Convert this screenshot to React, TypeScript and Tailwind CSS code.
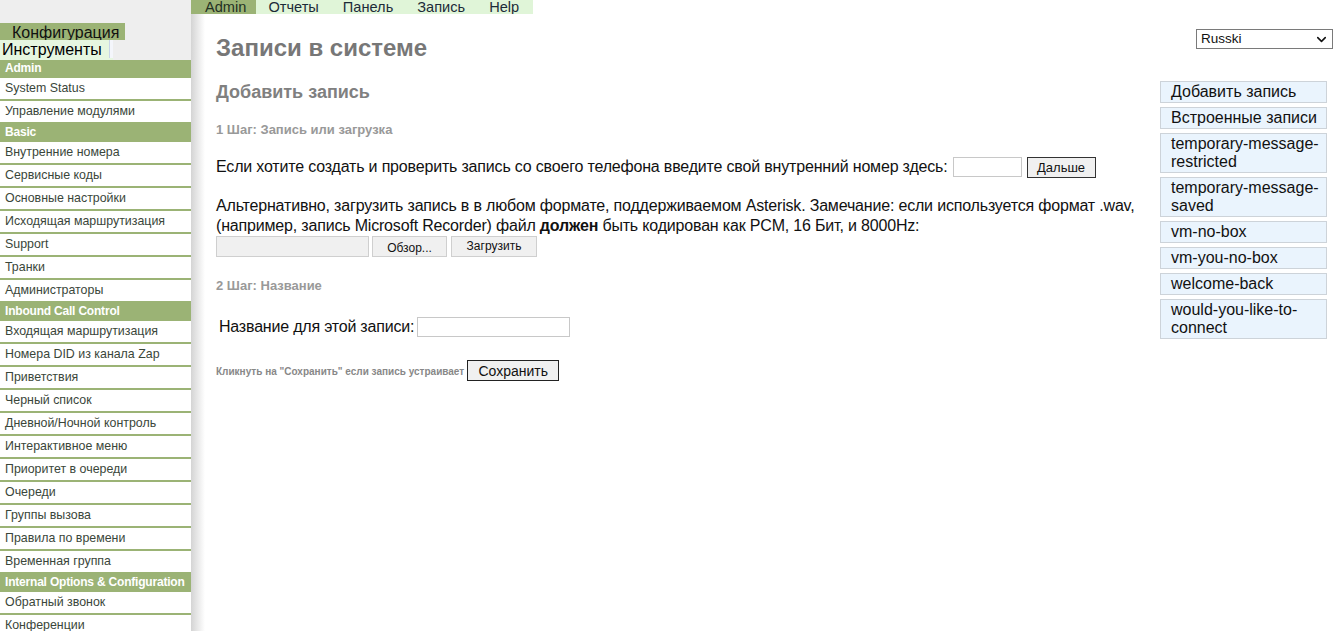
import { ChevronDown } from "lucide-react";

type NavGroup = { title: string; items: string[] };

const groups: NavGroup[] = [
	{ title: "Admin", items: ["System Status", "Управление модулями"] },
	{
		title: "Basic",
		items: [
			"Внутренние номера",
			"Сервисные коды",
			"Основные настройки",
			"Исходящая маршрутизация",
			"Support",
			"Транки",
			"Администраторы",
		],
	},
	{
		title: "Inbound Call Control",
		items: [
			"Входящая маршрутизация",
			"Номера DID из канала Zap",
			"Приветствия",
			"Черный список",
			"Дневной/Ночной контроль",
			"Интерактивное меню",
			"Приоритет в очереди",
			"Очереди",
			"Группы вызова",
			"Правила по времени",
			"Временная группа",
		],
	},
	{
		title: "Internal Options & Configuration",
		items: ["Обратный звонок", "Конференции", "Парковка"],
	},
];

const topNav = ["Admin", "Отчеты", "Панель", "Запись", "Help"];

const recordings = [
	"Добавить запись",
	"Встроенные записи",
	"temporary-message-restricted",
	"temporary-message-saved",
	"vm-no-box",
	"vm-you-no-box",
	"welcome-back",
	"would-you-like-to-connect",
];

function Sidebar() {
	return (
		<aside className="w-[191px] shrink-0 bg-[#eeeeee]">
			<div className="h-[23px]" />
			<div className="h-[17px] w-[125px] overflow-visible bg-[#9bb375] pl-[12px] text-[16px] leading-[19px] text-[#111]">
				Конфигурация
			</div>
			<div className="relative h-[20px] w-[113px] bg-[#e6f6e0] pl-[2px] text-[16px] leading-[20px] text-black">
				Инструменты
				<span className="absolute top-0 right-0 h-[18px] w-[4px] border-l border-[#c8d4e8] bg-[#f4f6fb]" />
			</div>
			<ul>
				{groups.map((group) => (
					<li key={group.title}>
						<div className="h-[18px] bg-[#9bb375] pl-[5px] text-[12px] leading-[16px] font-bold tracking-[-0.2px] text-white">
							{group.title}
						</div>
						<ul>
							{group.items.map((item) => (
								<li
									key={item}
									className="h-[23px] border-b-2 border-[#9bb375] bg-white pl-[5px] text-[12.4px] leading-[21px] text-[#3a463a]"
								>
									{item}
								</li>
							))}
						</ul>
					</li>
				))}
			</ul>
		</aside>
	);
}

function Button({ children, className = "" }: { children: React.ReactNode; className?: string }) {
	return (
		<button
			type="button"
			className={`border bg-[#f0f0f0] text-[#111] ${className}`}
		>
			{children}
		</button>
	);
}

export default function App() {
	return (
		<div className="flex h-[631px] overflow-hidden bg-white font-['Liberation_Sans',Arial,sans-serif]">
			<Sidebar />
			<div className="flex min-w-0 flex-1 flex-col">
				<nav className="flex h-[14px] w-fit bg-[#e0f5d8] text-[14.6px] leading-[14px]">
					{topNav.map((item, i) => (
						<span
							key={item}
							className={
								i === 0
									? "bg-[#9bb375] pr-[10px] pl-[14px] text-[#233023]"
									: "px-[12px] text-[#1c2b38]"
							}
						>
							{item}
						</span>
					))}
					<span className="w-[2px]" />
				</nav>

				<div className="flex flex-1 bg-[linear-gradient(to_right,#d4d4d4,#ffffff_14px)]">
					<main className="min-w-0 flex-1 pl-[25px] text-[#111]">
						<h1 className="mt-[20px] text-[24px] leading-[28px] font-bold text-[#777]">
							Записи в системе
						</h1>
						<h2 className="mt-[20px] text-[18px] leading-[21px] font-bold text-[#808080]">
							Добавить запись
						</h2>
						<h3 className="mt-[19px] text-[13px] leading-[15px] font-bold text-[#999]">
							1 Шаг: Запись или загрузка
						</h3>

						<div className="mt-[19px] flex h-[22px] items-center text-[16px] tracking-[-0.18px]">
							<span>
								Если хотите создать и проверить запись со своего телефона введите свой внутренний номер здесь:
							</span>
							<input
								type="text"
								className="ml-[5px] h-[20px] w-[69px] border border-[#c8c8c8] bg-white"
							/>
							<Button className="ml-[5px] h-[21px] w-[69px] border-[#333] text-[13px] tracking-normal">
								Дальше
							</Button>
						</div>

						<p className="mt-[18px] pr-[12px] text-[16px] leading-[20px] tracking-[-0.18px]">
							Альтернативно, загрузить запись в в любом формате, поддерживаемом Asterisk. Замечание: если используется формат .wav, (например, запись Microsoft Recorder) файл <b>должен</b> быть кодирован как PCM, 16 Бит, и 8000Hz:
						</p>
						<div className="flex h-[21px] items-stretch text-[12px]">
							<div className="w-[153px] border border-[#cfcfcf] bg-[#f0f0f0]" />
							<Button className="ml-[3px] w-[75px] border-[#cfcfcf] pt-[2px]">
								Обзор...
							</Button>
							<Button className="ml-[4px] w-[86px] border-[#cfcfcf] pb-[2px]">
								Загрузить
							</Button>
						</div>

						<h3 className="mt-[21px] text-[13px] leading-[15px] font-bold text-[#999]">
							2 Шаг: Название
						</h3>
						<div className="mt-[23px] flex h-[21px] items-center pl-[3px] text-[16px] tracking-[-0.2px]">
							<span>Название для этой записи:</span>
							<input
								type="text"
								className="ml-[3px] h-[20px] w-[153px] border border-[#c8c8c8] bg-white"
							/>
						</div>

						<div className="mt-[23px] flex items-end">
							<span className="pb-[2px] text-[10px] font-bold text-[#888]">
								Кликнуть на "Сохранить" если запись устраивает
							</span>
							<Button className="ml-[3px] h-[21px] w-[92px] border-[#222] text-[14px]">
								Сохранить
							</Button>
						</div>
					</main>

					<div className="flex w-[178px] shrink-0 flex-col">
						<div className="mt-[15px] mr-[5px] ml-auto flex h-[20px] w-[137px] items-center justify-between border border-[#7a7a7a] bg-white pr-[3px] pl-[4px] text-[13.5px] text-[#111]">
							<span>Russki</span>
							<ChevronDown size={15} strokeWidth={2.5} />
						</div>
						<ul className="mt-[32px] flex w-[167px] flex-col gap-[4px]">
							{recordings.map((rec) => (
								<li
									key={rec}
									className="border border-[#cdd3d9] bg-[#eaf4fd] py-[1px] pr-[4px] pl-[10px] text-[16px] leading-[18px] text-[#111]"
								>
									{rec}
								</li>
							))}
						</ul>
					</div>
				</div>
			</div>
		</div>
	);
}
